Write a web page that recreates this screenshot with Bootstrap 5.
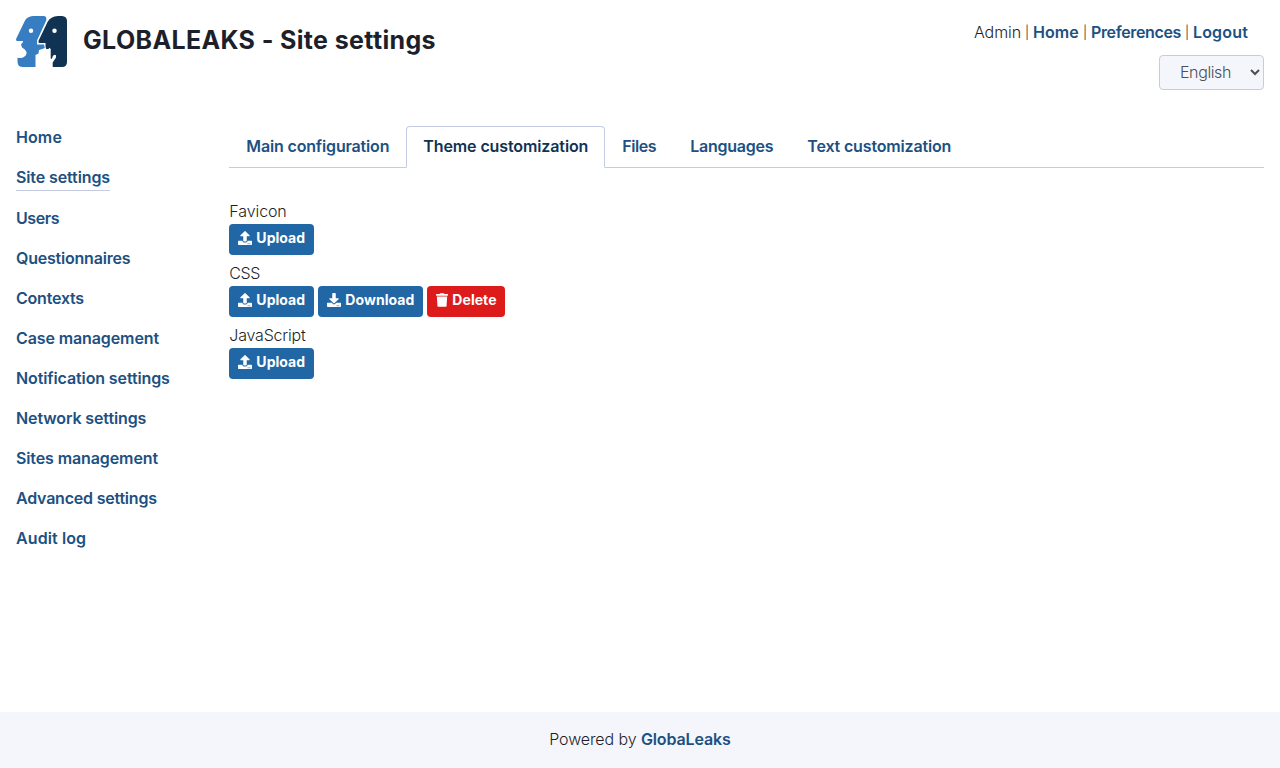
<!DOCTYPE html>
<html lang="en">
<head>
<meta charset="utf-8">
<meta name="viewport" content="width=device-width, initial-scale=1">
<title>GLOBALEAKS - Site settings</title>
<link href="https://cdn.jsdelivr.net/npm/bootstrap@5.3.0/dist/css/bootstrap.min.css" rel="stylesheet">
<style>
  body { font-family: Inter, "Liberation Sans", sans-serif; font-size: 16px; font-weight: 300; line-height: 24px; color: #1d1f2a; letter-spacing: -.1px; }
  a, .nav-link { color: #205081; font-weight: 600; text-decoration: none; white-space: nowrap; }
  .site-header { height: 126px; padding: 16px 16px 0; }
  .site-title { font-size: 25px; font-weight: 650; line-height: 30px; letter-spacing: .36px; margin: 9px 0 0 16px; }
  .user-bar { padding: 4px 16px 1px 0; }
  .bar-sep { width: 12px; text-align: center; font-size: 13px; }
  .lang-select { width: 105px; height: 35px; margin-top: 10px; padding: 0 0 1px 16px; font: 300 16px Inter, sans-serif; letter-spacing: -.4px; color: #495057; background: #f5f6fb; border: 1px solid #c3cce3; border-radius: 4px; }
  .page-row { --bs-gutter-x: 32px; }
  .side-nav { gap: 16px; }
  .side-nav a { line-height: 22px; padding-bottom: 2px; }
  .side-nav a.current { border-bottom: 1px solid #c3cce3; }
  .tab-bar { --bs-nav-tabs-border-color: #c3cce3; --bs-nav-tabs-border-radius: 4px; --bs-nav-tabs-link-active-border-color: #c3cce3 #c3cce3 #fff; --bs-nav-tabs-link-active-color: #103253; --bs-nav-link-color: #205081; }
  .tab-bar .nav-link { padding: 7px 16px 9px; }
  .upload-block { height: 62px; }
  .upload-label { line-height: 22px; padding-bottom: 2px; }
  .act { display: flex; align-items: center; height: 31px; padding: 0 0 4px 9px; gap: 4px; border: 0; border-radius: 4px; font-size: 14px; font-weight: 700; letter-spacing: .05px; color: #fff; background: #2166a5; }
  .act svg { height: 14px; fill: #fff; }
  .act-up { width: 85px; } .act-down { width: 105px; } .act-del { width: 78px; background: #de1b1b; }
  .site-footer { height: 56px; padding: 15px 16px 17px; background: #f5f6fb; }
  /* tracking steps */
  .tp2 { letter-spacing: .17px; } .tp1 { letter-spacing: .1px; } .tm1 { letter-spacing: -.11px; }
  .tm15 { letter-spacing: -.16px; } .tm2 { letter-spacing: -.21px; } .tm25 { letter-spacing: -.25px; }
  .tm3 { letter-spacing: -.35px; } .tm4 { letter-spacing: -.42px; }
</style>
</head>
<body class="d-flex flex-column min-vh-100">
<svg class="d-none">
  <symbol id="i-up" viewBox="0 0 512 512"><path d="M296 384h-80c-13.3 0-24-10.7-24-24V192h-87.7c-17.8 0-26.7-21.5-14.1-34.1L242.3 5.7c7.5-7.5 19.8-7.5 27.3 0l152.2 152.2c12.6 12.6 3.7 34.1-14.1 34.1H320v168c0 13.3-10.7 24-24 24zm216-8v112c0 13.3-10.7 24-24 24H24c-13.3 0-24-10.7-24-24V376c0-13.3 10.7-24 24-24h136v8c0 30.9 25.1 56 56 56h80c30.9 0 56-25.1 56-56v-8h136c13.3 0 24 10.7 24 24zm-124 88c0-11-9-20-20-20s-20 9-20 20 9 20 20 20 20-9 20-20zm64 0c0-11-9-20-20-20s-20 9-20 20 9 20 20 20 20-9 20-20z"/></symbol>
  <symbol id="i-down" viewBox="0 0 512 512"><path d="M216 0h80c13.300 0 24 10.700 24 24v168h87.700c17.800 0 26.700 21.500 14.100 34.100L269.700 378.300c-7.500 7.500-19.800 7.500-27.300 0L90.100 226.100c-12.600-12.600-3.700-34.100 14.100-34.100H192V24c0-13.300 10.700-24 24-24zm296 376v112c0 13.300-10.700 24-24 24H24c-13.300 0-24-10.700-24-24V376c0-13.300 10.700-24 24-24h146.700l49 49c20.100 20.100 52.500 20.100 72.600 0l49-49H488c13.300 0 24 10.700 24 24zm-124 88c0-11-9-20-20-20s-20 9-20 20 9 20 20 20 20-9 20-20zm64 0c0-11-9-20-20-20s-20 9-20 20 9 20 20 20 20-9 20-20z"/></symbol>
  <symbol id="i-trash" viewBox="0 0 448 512"><path d="M432 32H312l-9.400-18.700A24 24 0 0 0 281.100 0H166.800a23.720 23.720 0 0 0-21.400 13.300L136 32H16A16 16 0 0 0 0 48v32a16 16 0 0 0 16 16h416a16 16 0 0 0 16-16V48a16 16 0 0 0-16-16zM53.200 467a48 48 0 0 0 47.900 45h245.800a48 48 0 0 0 47.900-45L416 128H32z"/></symbol>
</svg>

<header class="site-header d-flex justify-content-between align-items-start">
  <div class="d-flex align-items-start">
    <svg width="51" height="51" viewBox="0 0 51 51" role="img" aria-label="Logo">
      <path fill="#377dc1" fill-rule="evenodd" d="M17 0H28Q31.500 .5 30 5L21 24.500V28.500H28L29.500 31.500 27 32.700 23 34 22.500 37.500 19.500 39V51H7Q1.500 51 1.500 45.500V41.500Q3 42.500 7 41.500 11 40 10.500 36 9.500 33 6 31.500L5 28.500 7 26V25H1Q-.5 24.500 .3 22.500L9 4.500Q11 .5 17 0ZM15 12.500A2.200 2.200 0 1 0 15 17A2.200 2.200 0 1 0 15 12.500Z"/>
      <path fill="#103253" stroke="#fff" stroke-width="2" paint-order="stroke" fill-rule="evenodd" d="M42 0H46Q51 .3 51 5V46Q51 51 46 51H36.700V46.500L40 41.500V39.200L38.500 38.700 37 39.700 35.700 43 34.700 42.500V33L33.500 31.800 32.500 33H30.200L29.500 30.500V27H23.500Q21.700 26.500 22.700 24.500L31.500 6Q34.500 .5 42 0ZM38.500 12.500A2.200 2.200 0 1 0 38.500 17A2.200 2.200 0 1 0 38.500 12.500Z"/>
    </svg>
    <h1 class="site-title">GLOBALEAKS - Site settings</h1>
  </div>
  <div class="d-flex flex-column align-items-end">
    <div class="user-bar d-flex">
      <span>Admin</span><span class="bar-sep">|</span><a href="#" class="tp1">Home</a><span class="bar-sep">|</span><a href="#" class="tm3">Preferences</a><span class="bar-sep">|</span><a href="#" class="tp2">Logout</a>
    </div>
    <select class="lang-select" aria-label="Language"><option>English</option></select>
  </div>
</header>

<div class="container-fluid px-0 flex-grow-1 overflow-hidden">
  <div class="row page-row mx-0">
    <nav class="col-2 side-nav d-flex flex-column align-items-start">
      <a href="#" class="tp1">Home</a>
      <a href="#" class="tm1 current">Site settings</a>
      <a href="#" class="tm4">Users</a>
      <a href="#" class="tm2">Questionnaires</a>
      <a href="#" class="tm2">Contexts</a>
      <a href="#" class="tm1">Case management</a>
      <a href="#" class="tm1">Notification settings</a>
      <a href="#" class="tm1">Network settings</a>
      <a href="#" class="tm1">Sites management</a>
      <a href="#" class="tm2">Advanced settings</a>
      <a href="#" class="tp1">Audit log</a>
    </nav>
    <main class="col-10">
      <ul class="nav nav-tabs tab-bar mb-0">
        <li class="nav-item"><a class="nav-link tm15" href="#">Main configuration</a></li>
        <li class="nav-item"><a class="nav-link tm1 active" href="#">Theme customization</a></li>
        <li class="nav-item"><a class="nav-link tm4" href="#">Files</a></li>
        <li class="nav-item"><a class="nav-link tm25" href="#">Languages</a></li>
        <li class="nav-item"><a class="nav-link tm15" href="#">Text customization</a></li>
      </ul>
      <div class="mt-3 pt-3">
        <div class="upload-block">
          <div class="upload-label">Favicon</div>
          <button class="act act-up" type="button"><svg width="14"><use href="#i-up"/></svg>Upload</button>
        </div>
        <div class="upload-block">
          <div class="upload-label tm4">CSS</div>
          <div class="d-flex gap-1">
            <button class="act act-up" type="button"><svg width="14"><use href="#i-up"/></svg>Upload</button>
            <button class="act act-down" type="button"><svg width="14"><use href="#i-down"/></svg>Download</button>
            <button class="act act-del" type="button"><svg width="12"><use href="#i-trash"/></svg>Delete</button>
          </div>
        </div>
        <div class="upload-block">
          <div class="upload-label tm2">JavaScript</div>
          <button class="act act-up" type="button"><svg width="14"><use href="#i-up"/></svg>Upload</button>
        </div>
      </div>
    </main>
  </div>
</div>

<footer class="site-footer text-center">Powered by <a href="#" class="tm1">GlobaLeaks</a></footer>
<script src="https://cdn.jsdelivr.net/npm/bootstrap@5.3.0/dist/js/bootstrap.bundle.min.js"></script>
</body>
</html>
